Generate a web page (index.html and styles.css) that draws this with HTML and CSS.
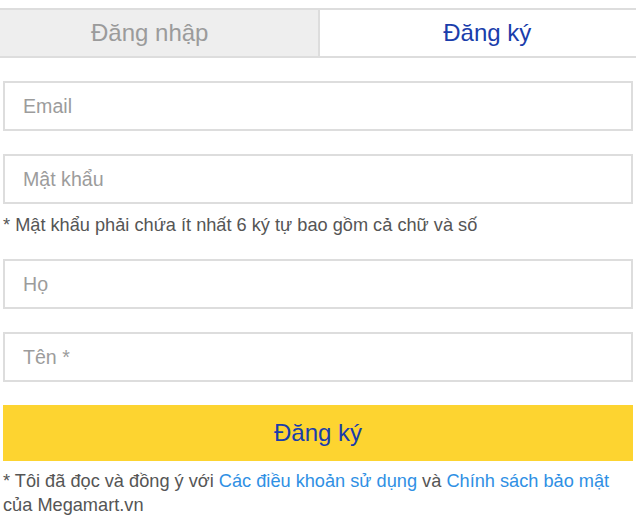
FILE: index.html
```html
<!DOCTYPE html>
<html lang="vi">
<head>
<meta charset="utf-8">
<title>Đăng ký</title>
<link rel="stylesheet" href="styles.css">
</head>
<body>
<div class="page">
  <div class="tabs">
    <div class="tab tab-inactive">Đăng nhập</div>
    <div class="tab tab-active">Đăng ký</div>
  </div>
  <form class="form">
    <input class="field" type="text" placeholder="Email">
    <div class="group">
      <input class="field field-pw" type="password" placeholder="Mật khẩu">
      <p class="hint">* Mật khẩu phải chứa ít nhất 6 ký tự bao gồm cả chữ và số</p>
    </div>
    <input class="field" type="text" placeholder="Họ">
    <input class="field" type="text" placeholder="Tên *">
    <button class="submit" type="button">Đăng ký</button>
    <p class="terms">* Tôi đã đọc và đồng ý với <a href="#">Các điều khoản sử dụng</a> và <a href="#">Chính sách bảo mật</a> của Megamart.vn</p>
  </form>
</div>
</body>
</html>
```

FILE: styles.css
```css
html, body {
  margin: 0;
  padding: 0;
  background: #fff;
  overflow: hidden;
}
body {
  font-family: "Liberation Sans", Arial, Helvetica, sans-serif;
  color: #555;
}
.page {
  width: 636px;
  overflow: hidden;
}
.tabs {
  display: flex;
  margin: 8px 0 0 -18px;
  width: 673px;
}
.tab {
  flex: 1 1 0;
  height: 46px;
  line-height: 46px;
  text-align: center;
  font-size: 24px;
  border-top: 2px solid #dddddd;
  border-bottom: 2px solid #dddddd;
}
.tab-inactive {
  background: #eeeeee;
  color: #9b9b9b;
  border-right: 2px solid #dddddd;
}
.tab-active {
  background: #fff;
  color: #1a3dab;
}
.form {
  display: flex;
  flex-direction: column;
  padding: 23px 3px 0 3px;
}
.field {
  box-sizing: border-box;
  width: 630px;
  height: 50px;
  margin: 0 0 23px 0;
  padding: 0 18px;
  border: 2px solid #dddddd;
  border-radius: 0;
  outline: none;
  background: #fff;
  font-family: "Liberation Sans", Arial, Helvetica, sans-serif;
  font-size: 19.6px;
  color: #333;
}
.field::placeholder {
  color: #9c9c9c;
  opacity: 1;
}
.group {
  display: flex;
  flex-direction: column;
}
.field-pw {
  margin-bottom: 9px;
}
.hint {
  margin: 0 0 22px 0;
  font-size: 18.2px;
  line-height: 24px;
  color: #555;
}
.submit {
  width: 630px;
  height: 56px;
  margin: 0;
  padding: 0;
  border: none;
  background: #fdd430;
  color: #1a3dab;
  font-family: "Liberation Sans", Arial, Helvetica, sans-serif;
  font-size: 24px;
  cursor: pointer;
}
.terms {
  margin: 8px 0 0 0;
  font-size: 18.2px;
  line-height: 24px;
  color: #555;
}
.terms a {
  color: #2f90e4;
  text-decoration: none;
}
```
